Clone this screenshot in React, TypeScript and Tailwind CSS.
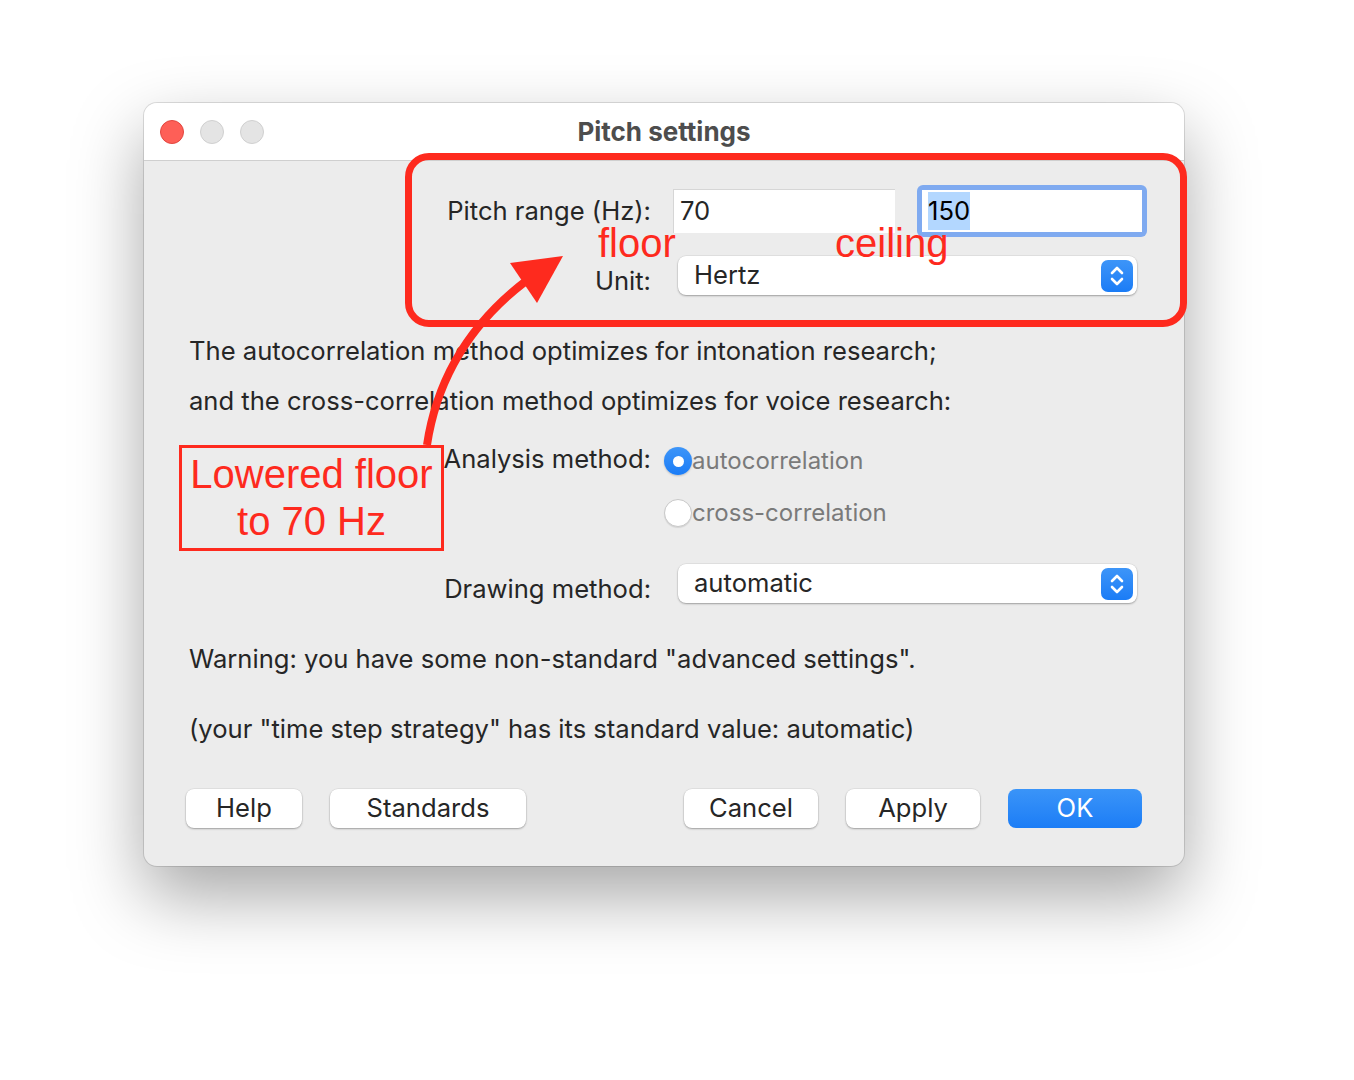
import React from 'react';

const Stepper: React.FC = () => (
  <div className="w-[32px] h-[32px] rounded-[7px] bg-gradient-to-b from-[#3d95f8] to-[#1a7cf6] flex items-center justify-center">
    <svg width="16" height="24" viewBox="0 0 16 24" fill="none" stroke="white" strokeWidth="2.6" strokeLinecap="round" strokeLinejoin="round">
      <path d="M3 9 L8 4 L13 9" />
      <path d="M3 15 L8 20 L13 15" />
    </svg>
  </div>
);

const Select: React.FC<{ value: string }> = ({ value }) => (
  <div className="w-[459px] h-[39px] bg-white rounded-[8px] shadow-[0_1px_2px_rgba(0,0,0,0.3),0_0_0_0.5px_rgba(0,0,0,0.08)] flex items-center justify-between pl-[16px] pr-[4px]">
    <span>{value}</span>
    <Stepper />
  </div>
);

const Radio: React.FC<{ checked?: boolean; label: string }> = ({ checked, label }) => (
  <div className="flex items-center h-[30px]">
    {checked ? (
      <div className="w-[28px] h-[28px] rounded-full bg-gradient-to-b from-[#3d95f8] to-[#1a7cf6] flex items-center justify-center shadow-[0_1px_2px_rgba(0,0,0,0.2)]">
        <div className="w-[11px] h-[11px] rounded-full bg-white" />
      </div>
    ) : (
      <div className="w-[28px] h-[28px] rounded-full bg-white border border-[#c8c8c8] shadow-[0_1px_1px_rgba(0,0,0,0.1)]" />
    )}
    <span className="text-[#7a7a7a] text-[24px] leading-[30px]">{label}</span>
  </div>
);

const Button: React.FC<{ label: string; width: string; primary?: boolean }> = ({ label, width, primary }) => (
  <div
    className={`${width} h-[39px] rounded-[8px] flex items-center justify-center ${
      primary
        ? 'bg-gradient-to-b from-[#3a94f8] to-[#1b7df6] text-white'
        : 'bg-white shadow-[0_1px_2px_rgba(0,0,0,0.3),0_0_0_0.5px_rgba(0,0,0,0.08)]'
    }`}
  >
    {label}
  </div>
);

export default function App() {
  return (
    <div className="w-[1354px] h-[1080px] bg-white pt-[103px] pl-[144px] font-['Inter','Liberation_Sans',sans-serif] text-[25.6px] text-[#262626]">
      {/* Window */}
      <div className="relative w-[1040px] h-[763px] rounded-[13px] bg-[#ececec] shadow-[0_30px_70px_rgba(0,0,0,0.35),0_0_0_1px_rgba(0,0,0,0.12)]">
        {/* Title bar */}
        <div className="relative h-[58px] bg-white rounded-t-[13px] border-b border-[#cfcfcf] flex items-center">
          <div className="flex gap-[16px] pl-[16px]">
            <div className="w-[24px] h-[24px] rounded-full bg-[#fe5f57] border border-[#e2463f]" />
            <div className="w-[24px] h-[24px] rounded-full bg-[#e4e4e4] border border-[#d0d0d0]" />
            <div className="w-[24px] h-[24px] rounded-full bg-[#e4e4e4] border border-[#d0d0d0]" />
          </div>
          <div className="absolute inset-0 flex items-center justify-center font-bold text-[26px] text-[#4d4d4d]">Pitch settings</div>
        </div>

        {/* Body */}
        <div className="pl-[45px] pr-[42px]">
          {/* Pitch range */}
          <div className="mt-[24px] h-[52px] flex items-center">
            <div className="w-[462px] shrink-0 text-right">Pitch range (Hz):</div>
            <div className="ml-[22px] w-[222px] shrink-0 h-[44px] bg-white border-t border-l border-[#d6d6d6] flex items-center pl-[6px]">70</div>
            <div className="ml-[22px] w-[230px] shrink-0 h-[52px] rounded-[6px] bg-[#7faaf0] p-[5px]">
              <div className="w-full h-full bg-white flex items-center pl-[6px]">
                <span className="bg-[#b3d7ff] text-black">150</span>
              </div>
            </div>
          </div>

          {/* Unit */}
          <div className="mt-[19px] h-[39px] flex items-end">
            <div className="w-[462px] shrink-0 text-right leading-[30px] -mb-[1px]">Unit:</div>
            <div className="ml-[27px] self-center">
              <Select value="Hertz" />
            </div>
          </div>

          {/* Description */}
          <div className="mt-[31px] leading-[50px]">
            <div>The autocorrelation method optimizes for intonation research;</div>
            <div>and the cross-correlation method optimizes for voice research:</div>
          </div>

          {/* Analysis method */}
          <div className="mt-[14px] flex">
            <div className="w-[462px] shrink-0 text-right leading-[40px] -mt-[1px]">Analysis method:</div>
            <div className="ml-[13px] flex flex-col gap-[22px] pt-[6px]">
              <Radio checked label="autocorrelation" />
              <Radio label="cross-correlation" />
            </div>
          </div>

          {/* Drawing method */}
          <div className="mt-[36px] h-[39px] flex items-end">
            <div className="w-[462px] shrink-0 text-right leading-[30px] -mb-[1px]">Drawing method:</div>
            <div className="ml-[27px] self-center">
              <Select value="automatic" />
            </div>
          </div>

          {/* Warnings */}
          <div className="mt-[36px] leading-[40px]">Warning: you have some non-standard "advanced settings".</div>
          <div className="mt-[30px] leading-[40px]">(your "time step strategy" has its standard value: automatic)</div>

          {/* Buttons */}
          <div className="mt-[40px] flex items-center">
            <div className="-ml-[3px] flex gap-[28px]">
              <Button label="Help" width="w-[116px]" />
              <Button label="Standards" width="w-[196px]" />
            </div>
            <div className="ml-auto flex gap-[28px]">
              <Button label="Cancel" width="w-[134px]" />
              <Button label="Apply" width="w-[134px]" />
              <Button label="OK" width="w-[134px]" primary />
            </div>
          </div>
        </div>

        {/* Annotations */}
        <div className="absolute left-[261px] top-[50px] w-[782px] h-[174px] border-[7px] border-[#fe2a1e] rounded-[24px] pointer-events-none" />
        <div className="absolute left-[454px] top-[116px] text-[40px] leading-[48px] text-[#fe2a1e] font-['Liberation_Sans',sans-serif]">floor</div>
        <div className="absolute left-[691px] top-[116px] text-[40px] leading-[48px] text-[#fe2a1e] font-['Liberation_Sans',sans-serif]">ceiling</div>
        <div className="absolute left-[35px] top-[342px] w-[265px] h-[106px] border-[3px] border-[#fe2a1e] bg-[#ececec] flex flex-col items-center justify-center text-[40px] leading-[47px] text-[#fe2a1e] font-['Liberation_Sans',sans-serif]">
          <div>Lowered floor</div>
          <div>to 70 Hz</div>
        </div>
        <svg className="absolute left-0 top-0 pointer-events-none" width="1040" height="763" viewBox="0 0 1040 763">
          <path d="M283 342 C292 282, 322 224, 382 178" fill="none" stroke="#fe2a1e" strokeWidth="8" />
          <polygon points="366,160 419,153 393,200" fill="#fe2a1e" />
        </svg>
      </div>
    </div>
  );
}
